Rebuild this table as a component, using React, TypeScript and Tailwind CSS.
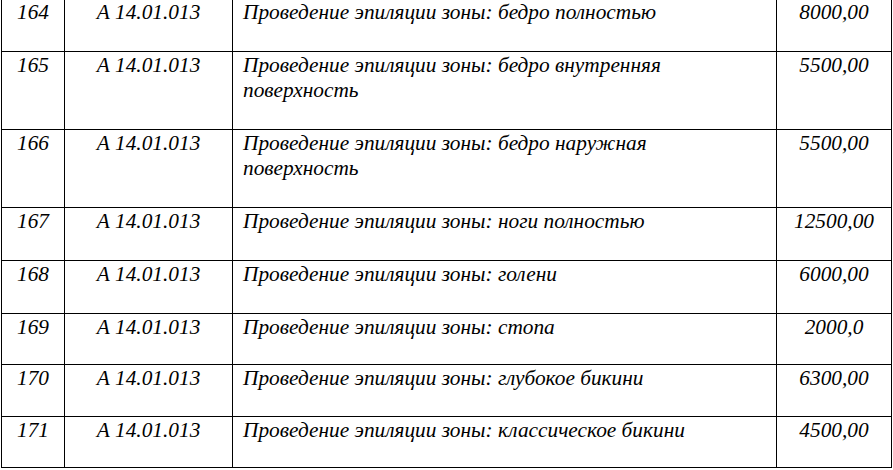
import React from "react";

type Row = { n: string; code: string; desc: string[]; price: string; h: string };

const rows: Row[] = [
  { n: "164", code: "А 14.01.013", desc: ["Проведение эпиляции зоны: бедро полностью"], price: "8000,00", h: "h-[53px]" },
  { n: "165", code: "А 14.01.013", desc: ["Проведение эпиляции зоны: бедро внутренняя", "поверхность"], price: "5500,00", h: "h-[78px]" },
  { n: "166", code: "А 14.01.013", desc: ["Проведение эпиляции зоны: бедро наружная", "поверхность"], price: "5500,00", h: "h-[78px]" },
  { n: "167", code: "А 14.01.013", desc: ["Проведение эпиляции зоны: ноги полностью"], price: "12500,00", h: "h-[53px]" },
  { n: "168", code: "А 14.01.013", desc: ["Проведение эпиляции зоны: голени"], price: "6000,00", h: "h-[53px]" },
  { n: "169", code: "А 14.01.013", desc: ["Проведение эпиляции зоны: стопа"], price: "2000,0", h: "h-[51px]" },
  { n: "170", code: "А 14.01.013", desc: ["Проведение эпиляции зоны: глубокое бикини"], price: "6300,00", h: "h-[52px]" },
  { n: "171", code: "А 14.01.013", desc: ["Проведение эпиляции зоны: классическое бикини"], price: "4500,00", h: "h-[52px]" },
];

const cell = "shrink-0 border-r border-black pt-[1px] font-['Liberation_Serif'] italic";

export default function App() {
  return (
    <div className="bg-white text-[21.33px] leading-[25px] text-black">
      <div className="ml-[1px] mt-[-2px] w-[891px] border-l border-black">
        {rows.map((r, i) => (
          <div
            key={r.n}
            className={`flex ${r.h} border-t border-black ${i === rows.length - 1 ? "border-b" : ""}`}
          >
            <div className={`w-[63px] text-center ${cell}`}>{r.n}</div>
            <div className={`w-[168px] text-center ${cell}`}>{r.code}</div>
            <div className={`w-[544px] pl-[10px] whitespace-nowrap ${cell}`}>
              {r.desc.map((d, j) => (
                <div key={j}>{d}</div>
              ))}
            </div>
            <div className={`w-[115px] text-center ${cell}`}>{r.price}</div>
          </div>
        ))}
      </div>
    </div>
  );
}
